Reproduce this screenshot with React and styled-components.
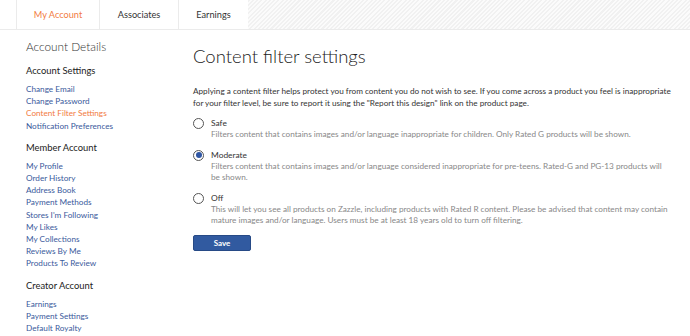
import React from "react";
import styled, { createGlobalStyle } from "styled-components";

const Global = createGlobalStyle`
  html, body { margin: 0; padding: 0; background: #fff; }
  body { font-family: Lato, "Open Sans", sans-serif; color: #333; }
  * { box-sizing: border-box; }
`;

const Page = styled.div`
  width: 690px;
  height: 336px;
  overflow: hidden;
`;

const TabBar = styled.div`
  display: flex;
  height: 30px;
  padding-left: 16px;
  border-bottom: 1px solid #ebebeb;
`;

const Tab = styled.div`
  width: ${p => p.$w}px;
  display: flex;
  align-items: center;
  justify-content: center;
  font-size: 9.2px;
  color: ${p => (p.$active ? "#f27b3f" : "#333")};
  background: #fff;
  border-left: 1px solid #ebebeb;
  &:last-of-type { border-right: 1px solid #ebebeb; }
`;

const Hatch = styled.div`
  flex: 1;
  background: repeating-linear-gradient(
    -45deg,
    #fbfbfb 0px,
    #fbfbfb 1.5px,
    #f1f1f1 1.5px,
    #f1f1f1 3px
  );
`;

const Body = styled.div`
  display: flex;
  padding-top: 9px;
`;

const Sidebar = styled.div`
  width: 193px;
  padding-left: 26px;
  flex-shrink: 0;
`;

const SideTitle = styled.div`
  font-size: 11.8px;
  font-weight: 300;
  color: #333;
  line-height: 16px;
  margin-bottom: 9px;
`;

const Group = styled.div`
  margin-bottom: 9px;
`;

const GroupTitle = styled.div`
  font-size: 9.4px;
  color: #222;
  line-height: 14px;
  margin-bottom: 5px;
`;

const SideLink = styled.a`
  display: block;
  font-size: 8.2px;
  line-height: 12.2px;
  color: ${p => (p.$active ? "#f27b3f" : "#3a5a9c")};
  text-decoration: none;
`;

const Main = styled.div`
  flex: 1;
  padding-right: 18px;
`;

const Title = styled.h1`
  margin: 5px 0 17px;
  font-size: 18.5px;
  font-weight: 300;
  color: #222;
  line-height: 24px;
`;

const Intro = styled.p`
  margin: 0 0 8px;
  font-size: 8.2px;
  line-height: 12px;
  color: #333;
`;

const Option = styled.label`
  display: flex;
  gap: 7px;
  margin-bottom: 8px;
`;

const Radio = styled.span`
  width: 11px;
  height: 11px;
  margin-top: 1px;
  border-radius: 50%;
  border: 1px solid #555;
  flex-shrink: 0;
  display: flex;
  align-items: center;
  justify-content: center;
  &::after {
    content: "";
    width: 6px;
    height: 6px;
    border-radius: 50%;
    background: ${p => (p.$checked ? "#2f56a4" : "transparent")};
  }
`;

const OptText = styled.div`
  display: flex;
  flex-direction: column;
`;

const OptLabel = styled.span`
  font-size: 8.4px;
  line-height: 12px;
  color: #333;
`;

const OptDesc = styled.span`
  font-size: 8.2px;
  line-height: 11.5px;
  color: #888;
`;

const SaveButton = styled.button`
  display: block;
  width: 58px;
  height: 16px;
  margin-top: 1px;
  padding: 0;
  background: #315aa0;
  border: 1px solid #274a86;
  border-radius: 2px;
  color: #fff;
  font-family: inherit;
  font-size: 8px;
  font-weight: 700;
`;

const groups = [
  {
    title: "Account Settings",
    links: ["Change Email", "Change Password", "Content Filter Settings", "Notification Preferences"],
    active: "Content Filter Settings",
  },
  {
    title: "Member Account",
    links: [
      "My Profile",
      "Order History",
      "Address Book",
      "Payment Methods",
      "Stores I'm Following",
      "My Likes",
      "My Collections",
      "Reviews By Me",
      "Products To Review",
    ],
  },
  {
    title: "Creator Account",
    links: ["Earnings", "Payment Settings", "Default Royalty"],
  },
];

const options = [
  {
    label: "Safe",
    desc: "Filters content that contains images and/or language inappropriate for children. Only Rated G products will be shown.",
  },
  {
    label: "Moderate",
    desc: "Filters content that contains images and/or language considered inappropriate for pre-teens. Rated-G and PG-13 products will be shown.",
    checked: true,
  },
  {
    label: "Off",
    desc: "This will let you see all products on Zazzle, including products with Rated R content. Please be advised that content may contain mature images and/or language. Users must be at least 18 years old to turn off filtering.",
  },
];

export default function App() {
  return (
    <Page>
      <Global />
      <TabBar>
        <Tab $w={83} $active>My Account</Tab>
        <Tab $w={79}>Associates</Tab>
        <Tab $w={70}>Earnings</Tab>
        <Hatch />
      </TabBar>
      <Body>
        <Sidebar>
          <SideTitle>Account Details</SideTitle>
          {groups.map(g => (
            <Group key={g.title}>
              <GroupTitle>{g.title}</GroupTitle>
              {g.links.map(l => (
                <SideLink key={l} href="#" $active={l === g.active}>{l}</SideLink>
              ))}
            </Group>
          ))}
        </Sidebar>
        <Main>
          <Title>Content filter settings</Title>
          <Intro>
            Applying a content filter helps protect you from content you do not wish to see. If you come across a product you feel is inappropriate for your filter level, be sure to report it using the "Report this design" link on the product page.
          </Intro>
          {options.map(o => (
            <Option key={o.label}>
              <Radio $checked={o.checked} />
              <OptText>
                <OptLabel>{o.label}</OptLabel>
                <OptDesc>{o.desc}</OptDesc>
              </OptText>
            </Option>
          ))}
          <SaveButton>Save</SaveButton>
        </Main>
      </Body>
    </Page>
  );
}
